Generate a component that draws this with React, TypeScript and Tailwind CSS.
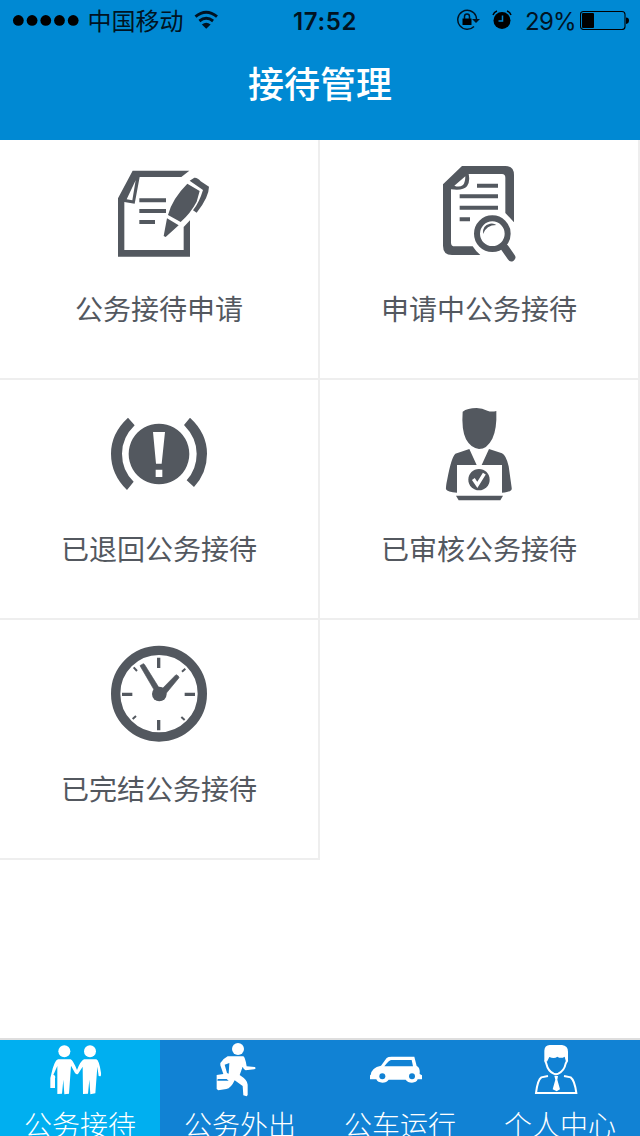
import { useState } from 'react';
import type { ReactNode } from 'react';

interface MenuItem {
  label: string;
  icon: ReactNode;
}

interface TabItem extends MenuItem {
  viewBox: string;
}

const menuItems: MenuItem[] = [
  {
    label: '公务接待申请',
    icon: (
      <>
        <path fillRule="evenodd" d="M98 47H268L244 66H119L104 146L73 141V285H251V216L270 196V305H54V130ZM107 76L80 133L97 136Z" />
        <path d="M118 130H198V142H118ZM118 162H198V174H118ZM118 195H165V207H118Z" />
        <path d="M262 86L299 108L290 140Q272 174 242 201L204 180Q216 132 262 86ZM201 190L236 211L197 246L191 243Z" />
        <path d="M269 77L283 68Q293 67 302 79L327 95Q327 126 290 173L279 166Q298 142 309 105Z" />
      </>
    ),
  },
  {
    label: '申请中公务接待',
    icon: (
      <>
        <path fillRule="evenodd" d="M126 33H256Q282 33 282 60V202L256 174V68Q256 57 246 57H146Q151 80 141 94Q129 108 93 103V263Q93 274 104 274H158Q168 290 181 300H96Q69 300 69 272V88ZM136 64L103 92Q118 98 129 90Q136 82 136 64Z" />
        <path d="M171 86H234V98H171ZM119 118H234V130H119ZM119 152H234V164H119ZM119 187H150V199H119Z" />
        <circle cx="217" cy="236" r="46" fill="none" stroke="currentColor" strokeWidth="18" />
        <path d="M254 278L274 307" stroke="currentColor" strokeWidth="24" strokeLinecap="round" />
        <path d="M189 237Q186 211 210 206Q222 204 229 210Q199 210 189 237Z" />
      </>
    ),
  },
  {
    label: '已退回公务接待',
    icon: (
      <>
        <path d="M84 68L104 91Q66 128 66 176Q66 226 101 260L81 285Q33 238 33 176Q33 115 84 68Z" />
        <path d="M270 68Q321 115 321 176Q321 233 282 276L260 256Q290 222 290 176Q290 129 252 90Z" />
        <path fillRule="evenodd" d="M177 86A91 91 0 1 1 176.900 86ZM159 111L168 206H185L195 111ZM167 224V246H187V224Z" />
      </>
    ),
  },
  {
    label: '已审核公务接待',
    icon: (
      <>
        <path d="M128 50Q142 39 170 39Q187 40 202 47Q214 52 229 48Q231 103 217 131Q201 162 177 162Q153 160 138 133Q124 103 128 50Z" />
        <path d="M106 176L148 162L170 210H111V293Q82 292 78 283Q77 275 82 252Q94 187 106 176Z" />
        <path d="M207 162L246 175Q258 180 266 214L275 278Q278 292 246 293V210H185Z" />
        <circle cx="177" cy="254" r="32" />
        <path d="M160 252L172 270L193 236" fill="none" stroke="white" strokeWidth="10" />
        <path d="M108 302H249L241 316H116Z" />
      </>
    ),
  },
  {
    label: '已完结公务接待',
    icon: (
      <>
        <circle cx="177" cy="176" r="130" fill="none" stroke="currentColor" strokeWidth="28" />
        <path d="M171 68H181V99H171ZM171 255H181V286H171ZM66 173H97V183H66ZM254 173H285V183H254Z" />
        <path d="M101 97L111 108M256 101L246 110M98 252L108 243M244 246L254 255" stroke="currentColor" strokeWidth="6" />
        <circle cx="178" cy="177" r="22" />
        <path d="M120 92L130 86Q132 86 135 91L178 160L163 166ZM228 119Q237 122 237 128L196 178L183 165Z" stroke="currentColor" strokeWidth="2" strokeLinejoin="round" />
      </>
    ),
  },
];

const tabs: TabItem[] = [
  {
    label: '公务接待',
    viewBox: '150 30 180 180',
    icon: (
      <>
        <circle cx="193" cy="64" r="18" />
        <circle cx="270" cy="64" r="18" />
        <path d="M174 88H212Q219 91 231 120Q242 92 252 88H289Q297 90 303 128Q304 139 300 139L296 138L292 110L286 190L271 193L268 149L264 191L249 192L248 110L234 132Q230 135 225 129L213 107L207 191L193 193L190 149L186 191L172 192V108L163 128L160 134Q168 137 165 145V174H151V144L154 132Q163 91 174 88Z" />
      </>
    ),
  },
  {
    label: '公务外出',
    viewBox: '630 30 180 180',
    icon: (
      <>
        <circle cx="714" cy="57" r="18" />
        <path fillRule="evenodd" d="M683 79H730Q736 83 740 109L764 111Q770 115 763 118L737 121Q731 119 728 110L719 135Q744 151 743 165V195L740 199L730 196L728 168L704 151Q693 175 679 177L655 181L650 177V135L670 132L661 106V99Q671 85 683 79ZM688 99L674 104L681 129L686 131ZM653 147H680L686 152H652Z" />
      </>
    ),
  },
  {
    label: '公车运行',
    viewBox: '150 30 180 180',
    icon: (
      <>
        <path fillRule="evenodd" d="M152 135Q154 113 183 107L200 84Q204 80 215 80H283L290 108Q301 112 299 132L306 136V148H293Q290 158 276 158Q263 158 257 149H206Q200 158 187 158Q173 158 169 148H150V136ZM213 90Q208 90 193 109H279L275 90Z" />
        <circle cx="187" cy="139" r="9" className="fill-[#1182d4]" />
        <circle cx="276" cy="139" r="9" className="fill-[#1182d4]" />
      </>
    ),
  },
  {
    label: '个人中心',
    viewBox: '630 30 180 180',
    icon: (
      <>
        <path d="M673 93V62Q674 46 689 45H726Q744 47 744 65V93L738 95L734 80Q723 87 712 80Q703 88 688 81L681 95Z" />
        <path d="M675 91L679 101Q684 123 701 131Q708 134 715 131Q733 122 737 101L742 91" fill="none" stroke="currentColor" strokeWidth="6" />
        <path d="M684 138L664 142Q653 149 648 189H769Q764 151 752 142L732 138" fill="none" stroke="currentColor" strokeWidth="6" />
        <path d="M703 137L714 138L712 149L720 178L710 184L698 178L706 149Z" />
      </>
    ),
  },
];

function StatusBar() {
  return (
    <div className="grid h-10 grid-cols-3 items-center pl-3 pr-2.5 font-[Inter,'Noto_Sans_CJK_SC',sans-serif] text-2xl/[34px] text-[#001322]">
      <div className="flex items-center whitespace-nowrap">
        <svg width="70" height="12" viewBox="0 0 70 12" fill="black">
          <circle cx="6.500" cy="6.500" r="5.500" />
          <circle cx="20.500" cy="6.500" r="5.500" />
          <circle cx="34.500" cy="6.500" r="5.500" />
          <circle cx="48.500" cy="6.500" r="5.500" />
          <circle cx="62.500" cy="6.500" r="5.500" />
        </svg>
        <span className="ml-[7px] pt-1">中国移动</span>
        <svg className="ml-2.5" width="25" height="20" viewBox="0 0 25 20" fill="none" stroke="currentColor" strokeWidth="3">
          <path d="M1.500 6.500Q12.500 -2.500 23.500 6.500M5.500 11Q12.500 5.500 19.500 11" />
          <path d="M8 14.500Q12.500 11 17 14.500L12.500 19Z" fill="currentColor" stroke="none" />
        </svg>
      </div>
      <span className="pl-2 pt-[3px] text-center font-semibold tracking-[0.6px]">17:52</span>
      <div className="flex items-center justify-end">
        <svg width="25" height="22" viewBox="0 0 25 22" fill="none" stroke="currentColor" strokeWidth="1.500">
          <path d="M20 7A9.500 9.500 0 1 0 18 17.500M20 7L20.500 10" />
          <path d="M16 10H24L20 14Z" fill="currentColor" stroke="none" />
          <path d="M6.500 9.500H15.500V16H6.500Z" fill="black" stroke="none" />
          <path d="M8.500 10V7.500Q8.500 5 11 5T13.500 7.500V10" />
        </svg>
        <svg className="ml-[11px]" width="20" height="20" viewBox="0 0 20 20" fill="black">
          <circle cx="10" cy="10.500" r="8.500" />
          <path d="M1 5Q2 2 5 1M15 1Q18 2 19 5" stroke="black" strokeWidth="1.500" fill="none" />
          <path d="M10.500 5.500V11H6.500" className="stroke-[#0089d3]" strokeWidth="1.500" fill="none" />
        </svg>
        <span className="ml-[13px] pt-[3px] tracking-[-0.7px]">29%</span>
        <svg className="ml-1" width="50" height="20" viewBox="0 0 50 20">
          <rect x="0.500" y="1.500" width="44.500" height="18" rx="3" fill="none" stroke="black" strokeWidth="1.100" />
          <rect x="2" y="3" width="12" height="15" rx="1" />
          <path d="M46 7.500Q49 7.500 49 10.500T46 14Z" />
        </svg>
      </div>
    </div>
  );
}

export default function App() {
  const [activeTab, setActiveTab] = useState(0);

  return (
    <div className="flex h-[1136px] w-[640px] flex-col overflow-hidden bg-white font-['Noto_Sans_CJK_SC',sans-serif]">
      <header className="h-[140px] bg-[#0089d3]">
        <StatusBar />
        <h1 className="pt-[15px] text-center text-4xl/[54px] font-medium text-white">接待管理</h1>
      </header>

      <main className="grid flex-1 auto-rows-[240px] grid-cols-2 content-start">
        {menuItems.map((item) => (
          <button key={item.label} className="flex flex-col items-center border-b-2 border-r-2 border-[#eeeeee] pt-[15px] text-[#53585f]">
            <svg width="120" height="120" viewBox="-3 0 360 360" fill="currentColor">{item.icon}</svg>
            <span className="mt-[13px] text-[28px]/10 font-normal">{item.label}</span>
          </button>
        ))}
      </main>

      <nav className="grid h-[98px] grid-cols-4 overflow-hidden border-t-2 border-[#dedede] bg-[#1182d4] text-white">
        {tabs.map((tab, index) => (
          <button
            key={tab.label}
            onClick={() => setActiveTab(index)}
            className={`flex h-28 flex-col items-center ${activeTab === index ? 'bg-[#00aff0]' : ''}`}
          >
            <svg width="60" height="60" viewBox={tab.viewBox} fill="currentColor">{tab.icon}</svg>
            <span className="mt-1 text-[28px]/10 font-light">{tab.label}</span>
          </button>
        ))}
      </nav>
    </div>
  );
}
